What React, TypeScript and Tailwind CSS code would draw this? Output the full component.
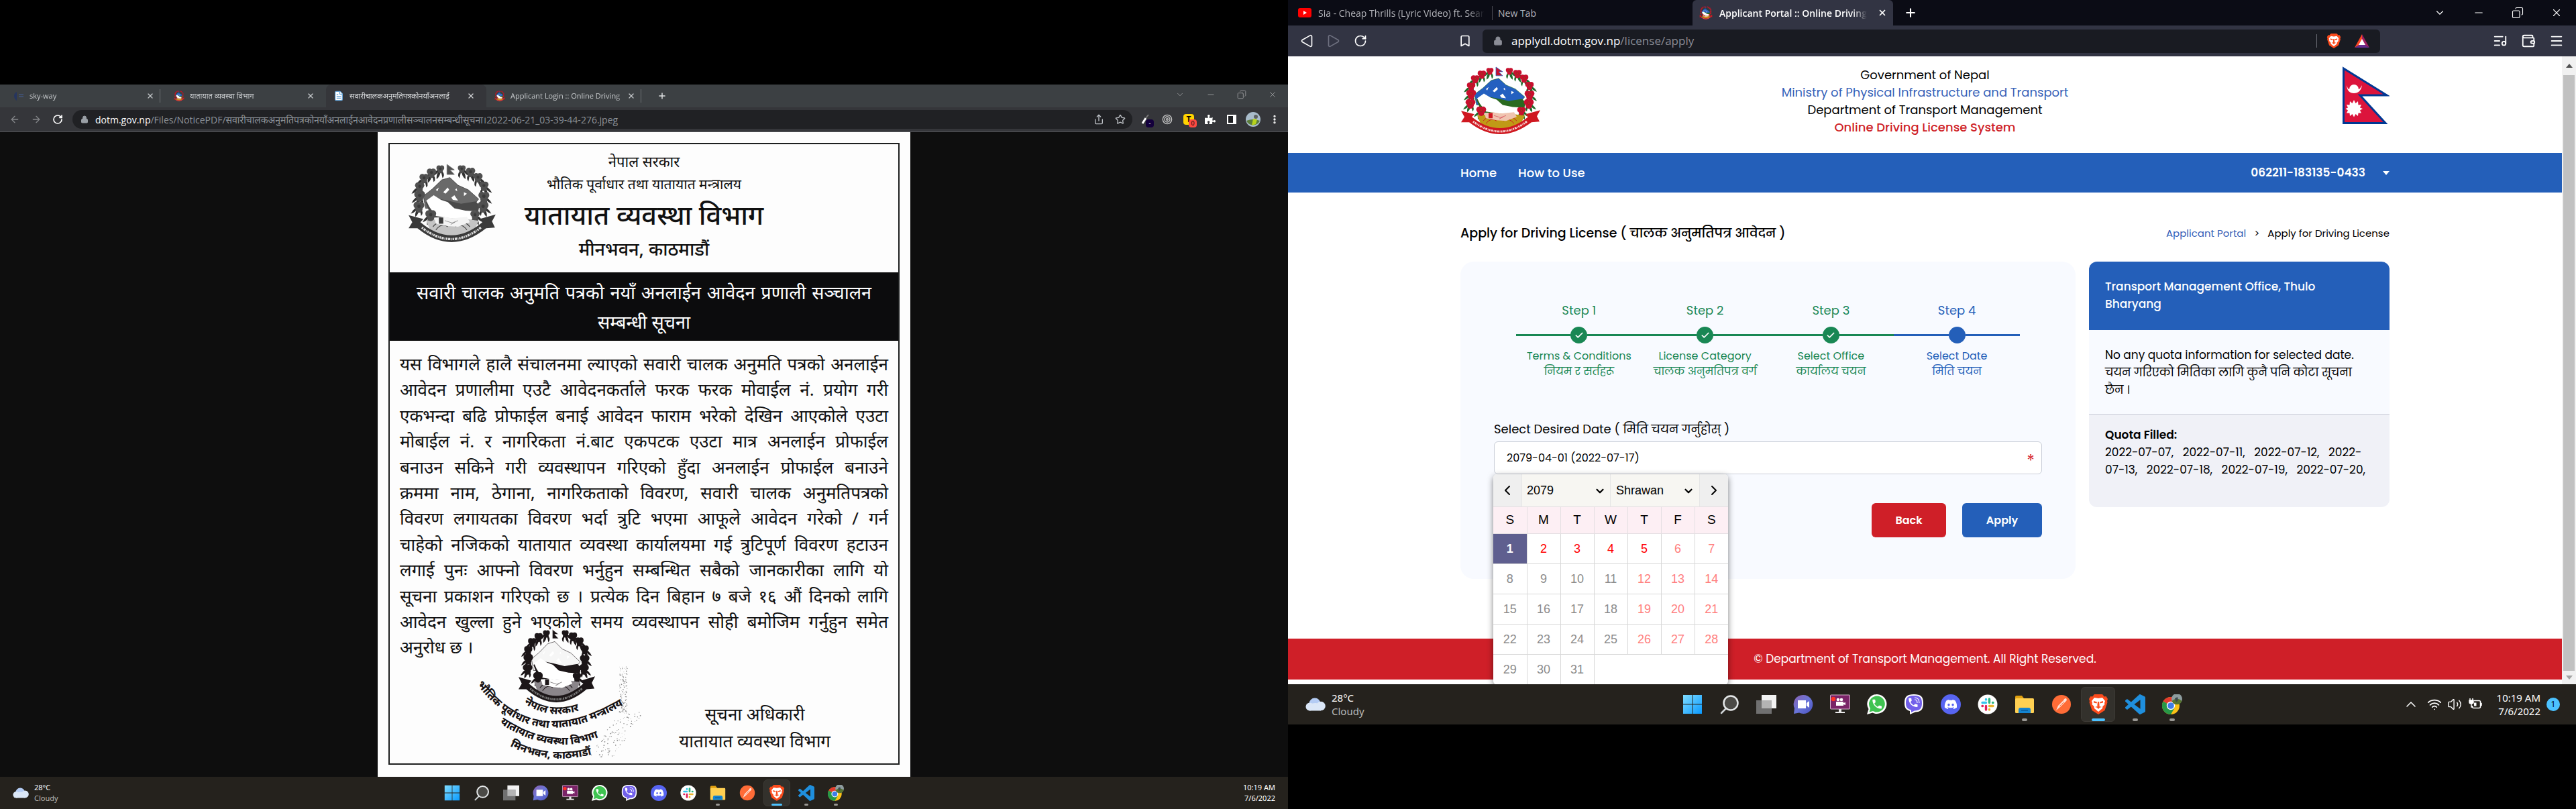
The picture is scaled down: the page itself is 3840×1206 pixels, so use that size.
import { ReactNode } from "react";
import {
  ArrowLeft,
  ArrowRight,
  Bookmark,
  Check,
  ChevronDown,
  ChevronLeft,
  ChevronRight,
  ChevronUp,
  Copy,
  FileText,
  ListMusic,
  Lock,
  Menu,
  Minus,
  MoreVertical,
  Plus,
  RotateCw,
  Share,
  Star,
  Target,
  Triangle,
  Volume2,
  Wallet,
  Wifi,
  X,
} from "lucide-react";
import { FaDiscord, FaPuzzlePiece } from "react-icons/fa";

type Palette = {
  flower: string;
  leaf: string;
  sky: string;
  hill: string;
  gold: string;
  ribbon: string;
  hand: string;
  motto: string;
};

const colourPalette: Palette = {
  flower: "#c8102e",
  leaf: "#1f6b2a",
  sky: "#2460c0",
  hill: "#2a6a1f",
  gold: "#c09a16",
  ribbon: "#cf1820",
  hand: "#f0c4b0",
  motto: "#f5d0d0",
};

const greyPalette: Palette = {
  flower: "#505050",
  leaf: "#303030",
  sky: "#6a6a6a",
  hill: "#4a4a4a",
  gold: "#c4c4c4",
  ribbon: "#3a3a3a",
  hand: "#f4f4f4",
  motto: "#dddddd",
};

const stampPalette: Palette = {
  flower: "#1c1618",
  leaf: "#1c1618",
  sky: "#f6f6f6",
  hill: "#1c1618",
  gold: "#8a858a",
  ribbon: "#1c1618",
  hand: "#ffffff",
  motto: "#777777",
};

const flowers = [
  [56, 15, 5], [44, 20, 6], [34, 27, 6], [28, 38, 6], [28, 50, 7], [27, 64, 7], [43, 75, 7],
  [85, 15, 5], [97, 19, 6], [107, 26, 6], [115, 37, 6], [115, 51, 7], [114, 64, 7], [103, 75, 6],
];

function EmblemArt({ p }: { p: Palette }) {
  return (
    <g>
      {flowers.map(([x, y, r], i) => {
        const side = x < 71 ? -1 : 1;
        return (
          <g key={i} fill={p.leaf}>
            <path d={`M${x} ${y} q${side * 7} 1 ${side * 11} 9 q${-side * 6} -1 ${-side * 11} -9z`} />
            <path d={`M${x} ${y} q${side * 6} 6 ${side * 5} 13 q${-side * 6} -4 ${-side * 5} -13z`} />
            <path d={`M${x} ${y} q${-side * 2} 7 ${-side * 3} 12 q${-side * 5} -5 ${side * 3} -12z`} />
          </g>
        );
      })}
      <path d="M33 50 L45 41 L58 29 L69 26 L80 36 L94 42 L108 54 L98 66 L36 66z" fill={p.sky} stroke={p.leaf} strokeWidth="0.6" />
      <path d="M60 45l6-6 2 3-5 5zM71 52l4-3 5 7-7-1zM88 45l4 2-4 3zM76 42l2-2 1 4zM50 42l4-3-2 5z" fill="#fff" />
      <path d="M36 58 L50 53 L66 56 L84 60 L104 57 L109 62 L106 78 L44 78z" fill={p.hill} />
      <path d="M37 56 L47 49 L57 55 L66 58 L75 66 L90 69 L106 70 L106 78 L98 80 L78 80 L50 76 L41 64z" fill="#fff" />
      <path d="M37 82 q34 -6 71 0 l-8 17 q-28 9 -56 0z" fill={p.gold} />
      <path d="M46 90q8-10 18-3M50 94q8-10 16-4M96 90q-8-10-18-3M92 94q-8-10-16-4" stroke={p.ribbon} strokeWidth="1" fill="none" />
      <path d="M48 79 L60 77 L72 79 L92 77 L96 84 L80 90 L66 89 L50 86z" fill={p.hand} />
      <path d="M62 82l10 3 8-3M70 87l6-3" stroke={p.flower} strokeWidth="0.5" fill="none" />
      <path d="M54 78h6v8h-6z" fill={p.ribbon} />
      {flowers.map(([x, y, r], i) => (
        <g key={i} fill={p.flower}>
          <circle cx={x - r * 0.4} cy={y - r * 0.3} r={r * 0.65} />
          <circle cx={x + r * 0.4} cy={y - r * 0.3} r={r * 0.65} />
          <circle cx={x} cy={y + r * 0.4} r={r * 0.7} />
          <circle cx={x} cy={y - r * 0.1} r={r * 0.28} fill={p.ribbon} stroke={p.leaf} strokeWidth="0.3" />
        </g>
      ))}
      <path d="M65 9 L75 16 L69 16 L75 22 L65 22z" fill={p.flower} stroke={p.sky} strokeWidth="0.8" />
      <path d="M13 75 L33 80 L29 84 Q71 118 113 84 L109 80 L131 74 L126 83 L130 91 L118 92 Q71 128 25 92 L13 92 L18 84z" fill={p.ribbon} />
      <path d="M31 91 Q71 121 111 91" stroke={p.motto} strokeWidth="3" strokeDasharray="2 1 3 1 1 1" fill="none" />
    </g>
  );
}

function Emblem({ p, className }: { p: Palette; className: string }) {
  return (
    <svg viewBox="12 8 120 102" preserveAspectRatio="none" className={className} role="img" aria-label="Emblem of Nepal">
      <EmblemArt p={p} />
    </svg>
  );
}

function NepalFlag() {
  return (
    <svg viewBox="0 0 70 86" className="h-[86px] w-[70px]" role="img" aria-label="Flag of Nepal">
      <path d="M1.5 3 L66 43 H26 L64 84.500 H1.500z" fill="#dc143c" stroke="#003893" strokeWidth="3" />
      <path d="M6 28q1 12 11 12t12-12q-4 7-5 6a7 7 0 1 0-14 0q-2 0-4-6z" fill="#fff" />
      <polygon
        fill="#fff"
        points="17,50 19.500,55 23,52 23.500,57.500 28,57 26,61.500 30,63 26,65.500 28,69.500 23.500,69.500 23,74 19.500,71 17,75.500 14.500,71 11,74 10.500,69.500 6,69.500 8,65.500 4.500,63 8,61.500 6,57 10.500,57.500 11,52 14.500,55"
      />
    </svg>
  );
}

/* ---------- application icons ---------- */

const phone =
  "M6.62 10.79c1.44 2.83 3.76 5.14 6.59 6.59l2.2-2.2c.27-.27.67-.36 1.02-.24 1.12.37 2.33.57 3.57.57.55 0 1 .45 1 1V20c0 .55-.45 1-1 1-9.39 0-17-7.61-17-17 0-.55.45-1 1-1h3.5c.55 0 1 .45 1 1 0 1.25.2 2.45.57 3.57.11.35.03.74-.25 1.02l-2.2 2.2z";

function Svg({ children, box = "0 0 30 30" }: { children: ReactNode; box?: string }) {
  return (
    <svg viewBox={box} className="size-full" aria-hidden="true">
      {children}
    </svg>
  );
}

const WindowsIcon = () => (
  <Svg>
    <defs>
      <linearGradient id="win" x1="0" y1="0" x2="1" y2="1">
        <stop offset="0" stopColor="#7fdcff" />
        <stop offset="1" stopColor="#0a9aff" />
      </linearGradient>
    </defs>
    <path d="M1 1h13.500v13.500H1zM15.500 1H29v13.500H15.500zM1 15.500h13.500V29H1zM15.500 15.500H29V29H15.500z" fill="url(#win)" />
  </Svg>
);
const SearchIcon = () => (
  <Svg>
    <path d="M11 20 L3 28" stroke="#cfd4d6" strokeWidth="2.500" strokeLinecap="round" />
    <circle cx="17" cy="13" r="10.500" fill="#4b4a46" stroke="#e4e7e8" strokeWidth="2.500" />
  </Svg>
);
const TaskViewIcon = () => (
  <Svg>
    <path d="M8 1h22v20H8z" fill="#f2f2f2" />
    <path d="M0 9h23v20H0z" fill="#707070" />
    <path d="M8 9h15v12H8z" fill="#b4b4b4" />
  </Svg>
);
const ChatIcon = () => (
  <Svg>
    <defs>
      <linearGradient id="chat" x1="0" y1="0" x2="1" y2="1">
        <stop offset="0" stopColor="#8a62b0" />
        <stop offset="0.500" stopColor="#6a75d8" />
        <stop offset="1" stopColor="#4a52c0" />
      </linearGradient>
    </defs>
    <path d="M15 1a14 14 0 1 1-6 26.500L1 29l1-8A14 14 0 0 1 15 1z" fill="url(#chat)" />
    <path d="M7 9h12v12H7zM20 13l4-3v10l-4-3z" fill="#fff" />
  </Svg>
);
const RecorderIcon = () => (
  <Svg>
    <rect x="0.500" y="1" width="29" height="21" rx="1" fill="#7a2468" stroke="#d8b8d0" />
    <path d="M13 22h4v4h5v2H8v-2h5z" fill="#e8e8e8" />
    <circle cx="12" cy="8" r="2.300" fill="#fff" />
    <circle cx="17" cy="8" r="2.300" fill="#fff" />
    <path d="M9 11h11v6H9zM20 13l3-1v4l-3-1z" fill="#fff" />
    <circle cx="5" cy="7" r="3.200" fill="#ff3224" />
  </Svg>
);
const WhatsAppIcon = () => (
  <Svg>
    <path d="M15 0a14.500 14.500 0 1 1-6.500 27.500L0 30l2.500-8A14.500 14.500 0 0 1 15 0z" fill="#fff" />
    <path d="M15 2.500a12 12 0 1 1-6 22.500l-5.500 1.500 1.500-5.500A12 12 0 0 1 15 2.500z" fill="#3fc351" />
    <g transform="translate(6 5.500) scale(0.760)">
      <path d={phone} fill="#fff" />
    </g>
  </Svg>
);
const ViberIcon = () => (
  <Svg>
    <path d="M15 0c10 0 14 3 14 13s-4 13.500-12 13.500L9 30v-5C3 23 1 20 1 13 1 3 5 0 15 0z" fill="#fff" />
    <path d="M15 2c8.500 0 12 2.500 12 11s-3 11-11 11.500l-5 2.500v-3.500C5 22 3 19 3 13 3 4.500 6.500 2 15 2z" fill="#7260ea" />
    <g transform="translate(5 3.500) scale(0.740)">
      <path d={phone} fill="#fff" />
    </g>
    <path d="M16 5q7 0 7 8M16 8q4 0 4 5" stroke="#fff" strokeWidth="1.200" fill="none" />
  </Svg>
);
const DiscordIcon = () => (
  <span className="flex size-full items-center justify-center rounded-full bg-[#5865f2] text-white">
    <FaDiscord className="size-2/3" />
  </span>
);
const SlackIcon = () => (
  <Svg>
    <circle cx="15" cy="15" r="14.500" fill="#fff" />
    <g strokeWidth="3.400" strokeLinecap="round">
      <path d="M7 12.500h5.500M12.500 7.500v0.500" stroke="#36c5f0" />
      <path d="M17.500 7v5.500M22.500 12.500h0.500" stroke="#2eb67d" />
      <path d="M12.500 17.500V23M7 17.500h0.500" stroke="#e01e5a" />
      <path d="M17.500 17.500H23M17.500 22.500v0.500" stroke="#ecb22e" />
    </g>
  </Svg>
);
const FolderIcon = () => (
  <Svg>
    <path d="M1 4q0-2 2-2h8l3 4v4H1z" fill="#e0a010" />
    <rect x="1" y="6" width="28" height="22" rx="1.500" fill="#ffd052" />
    <path d="M6 28v-5q0-3 3-3h12q3 0 3 3v5z" fill="#1484d0" />
    <path d="M10 24h10" stroke="#0a5a98" strokeWidth="1.500" />
  </Svg>
);
const PostmanIcon = () => (
  <Svg>
    <circle cx="15" cy="15" r="14" fill="#ff6c37" />
    <path d="M22 6q2 3-1 5l-8 8-3-2 8-8q1-3 4-3zM10 17l3 2-6 5z" fill="#fbe3da" />
    <path d="M12 18l7-7" stroke="#ff6c37" />
  </Svg>
);
const BraveIcon = () => (
  <Svg>
    <path d="M9 0h12l3 3.500 2.500-.5L29 7l-1 3 .5 2-4 12L15 30l-9.500-6-4-12L2 10 1 7l2.500-4 2.500.5z" fill="#fb4b1c" />
    <path d="M9 5l6 1 6-1 4 5-1 3 .5 2-3 3-.5 3-6 5-6-5-.5-3-3-3 .5-2-1-3z" fill="#fff" />
    <path d="M8 10l5 1.500-.5 2L8 12.500zM22 10l-5 1.500.5 2 4.500-1zM14 11h2l.7 6-1.700 1.500L13.300 17zM10 19l5-1.500 5 1.500-3 .7L15 22l-2-2.300z" fill="#fb4b1c" />
  </Svg>
);
const CodeIcon = () => (
  <Svg box="0 0 24 24">
    <path
      fill="#1f8fdd"
      d="M23.150 2.587L18.210.210a1.494 1.494 0 0 0-1.705.290l-9.460 8.630-4.120-3.128a.999.999 0 0 0-1.276.057L.327 7.261A1 1 0 0 0 .326 8.740L3.899 12 .326 15.260a1 1 0 0 0 .001 1.479L1.650 17.940a.999.999 0 0 0 1.276.057l4.120-3.128 9.460 8.630a1.492 1.492 0 0 0 1.704.290l4.942-2.377A1.500 1.500 0 0 0 24 20.060V3.939a1.500 1.500 0 0 0-.850-1.352zm-5.146 14.861L10.826 12l7.178-5.448v10.896z"
    />
  </Svg>
);
const ChromeIcon = () => (
  <Svg>
    <circle cx="13" cy="17" r="13" fill="#fbc116" />
    <path d="M13 17L1.700 10.500A13 13 0 0 1 24.300 10.500z" fill="#e33b2e" />
    <path d="M13 17L1.700 10.500A13 13 0 0 0 13 30l5.500-9.500z" fill="#279847" />
    <circle cx="13" cy="17" r="6.200" fill="#fff" />
    <circle cx="13" cy="17" r="4.800" fill="#3f7de8" />
    <circle cx="22" cy="7" r="8" fill="#8d9c9e" />
    <path d="M14.500 10q8-7 15 0a8 8 0 0 1-15 0z" fill="#56742f" />
    <path d="M19 6l4-2 1 5-3 3z" fill="#3d4a4f" />
  </Svg>
);
const CloudIcon = () => (
  <Svg box="0 0 30 20">
    <circle cx="14" cy="9" r="8.500" fill="#b4ccf4" />
    <circle cx="6.500" cy="13.500" r="6" fill="#dbe7f7" />
    <circle cx="23" cy="12.500" r="6.800" fill="#dbe7f7" />
    <path d="M6 10q9-4 17 0v9.500H6z" fill="#dbe7f7" />
  </Svg>
);
const PluggedBatteryIcon = () => (
  <svg viewBox="0 0 20 20" className="mr-[22px] size-5" fill="none" stroke="currentColor" strokeWidth="1.500" aria-hidden="true">
    <path d="M8 4.500h7.500q2 0 2 2v7q0 2-2 2h-8q-2 0-2-2V12M17.500 8.500H19v3h-1.500" />
    <path d="M2 1v3M6 1v3" />
    <path d="M1 4h6v3q0 2-3 2T1 7z" fill="currentColor" />
    <path d="M4 9v5h2" />
    <path d="M8 7.500h3.500v5H8z" fill="currentColor" stroke="none" />
  </svg>
);

const apps = [
  { name: "Start", Icon: WindowsIcon, state: "" },
  { name: "Search", Icon: SearchIcon, state: "" },
  { name: "Task view", Icon: TaskViewIcon, state: "" },
  { name: "Chat", Icon: ChatIcon, state: "" },
  { name: "Screen recorder", Icon: RecorderIcon, state: "" },
  { name: "WhatsApp", Icon: WhatsAppIcon, state: "" },
  { name: "Viber", Icon: ViberIcon, state: "" },
  { name: "Discord", Icon: DiscordIcon, state: "" },
  { name: "Slack", Icon: SlackIcon, state: "" },
  { name: "File Explorer", Icon: FolderIcon, state: "open" },
  { name: "Postman", Icon: PostmanIcon, state: "" },
  { name: "Brave", Icon: BraveIcon, state: "active" },
  { name: "Visual Studio Code", Icon: CodeIcon, state: "open" },
  { name: "Chrome", Icon: ChromeIcon, state: "open" },
];

function Taskbar({ large = false }: { large?: boolean }) {
  return (
    <footer
      className={
        large
          ? "grid h-[60px] shrink-0 grid-cols-[1fr_auto_1fr] items-center bg-[#25221d] font-['Noto_Sans',sans-serif] text-[15px] leading-5 text-white"
          : "grid h-12 shrink-0 grid-cols-[1fr_auto_1fr] items-center bg-[#25221d] font-['Noto_Sans',sans-serif] text-[11px] leading-4 text-white"
      }
    >
      <div className={large ? "flex items-center gap-[9px] pl-[26px]" : "flex items-center gap-2 pl-[19px]"}>
        <span className={large ? "h-5 w-[30px]" : "h-4 w-6"}>
          <CloudIcon />
        </span>
        <div>
          <div>28°C</div>
          <div className="text-[#b9b7b4]">Cloudy</div>
        </div>
      </div>
      <div className="flex">
        {apps.map(({ name, Icon, state }) => (
          <button
            key={name}
            type="button"
            aria-label={name}
            className={
              large
                ? "relative flex h-[60px] w-[55px] items-center justify-center"
                : "relative flex h-12 w-11 items-center justify-center"
            }
          >
            {state === "active" && (
              <span className="absolute inset-x-[2px] inset-y-1 rounded-md border border-[#3d3a35] bg-[#33312c]" />
            )}
            <span className={large ? "relative size-[30px]" : "relative size-6"}>
              <Icon />
            </span>
            {state === "active" && (
              <span className={large ? "absolute bottom-[5px] h-1 w-5 rounded-full bg-[#4cc2ff]" : "absolute bottom-[5px] h-[3px] w-4 rounded-full bg-[#4cc2ff]"} />
            )}
            {state === "open" && (
              <span className={large ? "absolute bottom-[5px] h-1 w-2 rounded-full bg-[#9a9894]" : "absolute bottom-[5px] h-[3px] w-[6px] rounded-full bg-[#9a9894]"} />
            )}
          </button>
        ))}
      </div>
      {large ? (
        <div className="flex items-center justify-end pr-6">
          <ChevronUp className="mr-3 size-6" strokeWidth={1.5} />
          <Wifi className="mr-2 size-[22px]" />
          <Volume2 className="mr-[10px] size-[22px]" strokeWidth={1.5} />
          <PluggedBatteryIcon />
          <div className="text-right">
            <div>10:19 AM</div>
            <div>7/6/2022</div>
          </div>
          <span className="ml-[9px] flex size-5 items-center justify-center rounded-full bg-[#4cc2ff] text-[12px] text-black">
            1
          </span>
        </div>
      ) : (
        <div className="pr-[19px] text-right">
          <div>10:19 AM</div>
          <div>7/6/2022</div>
        </div>
      )}
    </footer>
  );
}

/* ---------- left monitor ---------- */

const SmallEmblem = ({ large = false }: { large?: boolean }) => (
  <Emblem p={colourPalette} className={large ? "h-5 w-5 shrink-0" : "h-4 w-4 shrink-0"} />
);

function ChromeTab({ icon, title, active = false, divider = false }: { icon: ReactNode; title: string; active?: boolean; divider?: boolean }) {
  return (
    <div
      className={
        active
          ? "flex w-[239px] items-center rounded-t-lg bg-[#35363a] pr-2 pl-[11px] text-[#d6d8da]"
          : "flex w-[239px] items-center pr-2 pl-3 text-[#c8cbce]"
      }
    >
      {icon}
      <span className="ml-2 w-[176px] whitespace-nowrap [mask-image:linear-gradient(to_right,black_90%,transparent)]">
        {title}
      </span>
      <button type="button" aria-label={`Close ${title}`} className="ml-auto flex items-center">
        <X className="size-3" strokeWidth={2.5} />
      </button>
      <span className={divider ? "ml-2 h-5 w-px bg-[#6d7073]" : "ml-2 h-5 w-px"} />
    </div>
  );
}

function ChromeBrowserBars() {
  return (
    <div className="shrink-0 font-['Open_Sans','Noto_Sans',sans-serif]">
      <div className="flex h-[34px] items-stretch bg-[#3c4043] pl-2 text-[11px]">
        <ChromeTab
          title="sky-way"
          divider
          icon={
            <svg viewBox="0 0 16 16" className="size-4 shrink-0" aria-hidden="true">
              <path d="M5 2v13q-4-3-4-7t4-6z" fill="#26355f" />
              <path d="M8 6h7M8 9h7" stroke="#41547c" strokeWidth="1.500" />
            </svg>
          }
        />
        <ChromeTab title="यातायात व्यवस्था विभाग" icon={<SmallEmblem />} />
        <ChromeTab
          title="सवारीचालकअनुमतिपत्रकोनयाँअनलाई"
          active
          icon={<FileText className="size-4 shrink-0 fill-white text-[#6aa6d8]" />}
        />
        <ChromeTab title="Applicant Login :: Online Driving" divider icon={<SmallEmblem />} />
        <button type="button" aria-label="New tab" className="ml-4 text-[#dfe1e3]">
          <Plus className="size-[14px]" strokeWidth={2.5} />
        </button>
        <div className="ml-auto flex items-start gap-8 pt-2 pr-4 text-[#9a9c9e]">
          <ChevronDown className="size-[14px]" strokeWidth={1.5} />
          <Minus className="size-[14px]" strokeWidth={1.5} />
          <Copy className="size-[14px] -scale-x-100" strokeWidth={1.5} />
          <X className="size-[14px]" strokeWidth={1.5} />
        </div>
      </div>
      <div className="flex h-[37px] items-center border-b border-[#55565a] bg-[#35363a] pr-3 pl-[14px]">
        <button type="button" aria-label="Back" className="text-[#85878a]">
          <ArrowLeft className="size-4" />
        </button>
        <button type="button" aria-label="Forward" className="ml-4 text-[#85878a]">
          <ArrowRight className="size-4" />
        </button>
        <button type="button" aria-label="Reload" className="ml-4 text-white">
          <RotateCw className="size-4" strokeWidth={2.5} />
        </button>
        <div className="ml-[14px] flex h-7 flex-1 items-center rounded-full bg-[#202124] pr-[10px] pl-3 text-[14px]">
          <Lock className="size-3 fill-[#9aa0a6] text-[#9aa0a6]" />
          <span className="ml-[10px] text-[#8e9399]">
            <span className="text-white">dotm.gov.np</span>
            /Files/NoticePDF/सवारीचालकअनुमतिपत्रकोनयाँअनलाईनआवेदनप्रणालीसञ्चालनसम्बन्धीसूचना।2022-06-21_03-39-44-276.jpeg
          </span>
          <Share className="ml-auto size-4 text-[#bdc1c6]" />
          <Star className="ml-4 size-4 text-[#bdc1c6]" />
        </div>
        <div className="ml-3 flex items-center gap-4 text-white">
          <span className="relative size-4">
            <svg viewBox="0 0 16 16" className="size-4" aria-hidden="true">
              <path d="M3 14l5-8" stroke="#fff" strokeWidth="3" />
              <path d="M8 6l4-5" stroke="#777" strokeWidth="2" />
            </svg>
            <span className="absolute top-2 left-2 flex h-3 w-3 items-center justify-center rounded-sm bg-[#14003c] text-[9px]">-</span>
          </span>
          <Target className="size-4 text-[#c8c8c8]" />
          <span className="relative flex size-4 items-center justify-center rounded bg-[#ffd400] text-[12px] font-bold text-black">
            T
            <span className="absolute top-2 left-2 flex h-3 w-3 items-center justify-center rounded-sm bg-[#ff4a42] text-[9px] font-normal">0</span>
          </span>
          <FaPuzzlePiece className="size-4" />
          <svg viewBox="0 0 16 16" className="size-4" aria-hidden="true">
            <path d="M2 2h12v12H2z" fill="#202124" stroke="#fff" strokeWidth="2" />
            <path d="M10 2h4v12h-4z" fill="#fff" />
          </svg>
          <svg viewBox="0 0 22 22" className="-mx-[3px] size-[22px]" aria-hidden="true">
            <circle cx="11" cy="11" r="11" fill="#a9bccb" />
            <path d="M1 13q10-4 20 0a11 11 0 0 1-20 0z" fill="#5c7d3c" />
            <path d="M11 10l6 1-2 7-6 2z" fill="#b7d31c" />
            <circle cx="15" cy="7" r="3" fill="#5d6264" />
          </svg>
          <MoreVertical className="size-4" strokeWidth={3} />
        </div>
      </div>
    </div>
  );
}

const noticeLines = [
  "यस विभागले हालै संचालनमा ल्याएको सवारी चालक अनुमति पत्रको अनलाईन",
  "आवेदन प्रणालीमा एउटै आवेदनकर्ताले फरक फरक मोवाईल नं. प्रयोग गरी",
  "एकभन्दा बढि प्रोफाईल बनाई आवेदन फाराम भरेको देखिन आएकोले एउटा",
  "मोबाईल नं. र नागरिकता नं.बाट एकपटक एउटा मात्र अनलाईन प्रोफाईल",
  "बनाउन सकिने गरी व्यवस्थापन गरिएको हुँदा अनलाईन प्रोफाईल बनाउने",
  "क्रममा नाम, ठेगाना, नागरिकताको विवरण, सवारी चालक अनुमतिपत्रको",
  "विवरण लगायतका विवरण भर्दा त्रुटि भएमा आफूले आवेदन गरेको / गर्न",
  "चाहेको नजिकको यातायात व्यवस्था कार्यालयमा गई त्रुटिपूर्ण विवरण हटाउन",
  "लगाई पुनः आफ्नो विवरण भर्नुहुन सम्बन्धित सबैको जानकारीका लागि यो",
  "सूचना प्रकाशन गरिएको छ । प्रत्येक दिन बिहान ७ बजे १६ औं दिनको लागि",
  "आवेदन खुल्ला हुने भएकोले समय व्यवस्थापन सोही बमोजिम गर्नुहुन समेत",
];

const noise = (n: number) => {
  const v = Math.sin(n * 12.9898) * 43758.5453;
  return v - Math.floor(v);
};

const speckles = Array.from({ length: 240 }, (_, i) => {
  const t = noise(i + 1);
  const left = t < 0.5 ? 224 : 224 - (t - 0.5) * 90;
  const width = t < 0.5 ? 12 : 36;
  return { x: left + noise(i + 500) * width, y: 62 + t * 135, r: noise(i + 900) * 0.6 + 0.3 };
});

function Seal() {
  return (
    <svg viewBox="0 0 260 210" className="absolute -top-3 left-[103px] h-[210px] w-[260px] font-['Noto_Sans',sans-serif]" role="img" aria-label="Official stamp">
      <svg x="73" y="5" width="116" height="110" viewBox="12 8 120 102" preserveAspectRatio="none">
        <EmblemArt p={stampPalette} />
      </svg>
      <defs>
        <path id="arc1" d="M82 116 Q125 146 180 121" />
        <path id="arc2" d="M12 88 Q100 208 250 106" />
        <path id="arc3" d="M46 146 Q130 202 208 160" />
        <path id="arc4" d="M61 180 Q120 212 192 190" />
      </defs>
      <g fill="#161214" fontSize="16" fontWeight="800">
        <text><textPath href="#arc1">नेपाल सरकार</textPath></text>
        <text><textPath href="#arc2">भौतिक पूर्वाधार तथा यातायात मन्त्रालय</textPath></text>
        <text><textPath href="#arc3">यातायात व्यवस्था विभाग</textPath></text>
        <text><textPath href="#arc4">मिनभवन, काठमाडौं</textPath></text>
      </g>
      {speckles.map((s, i) => (
        <circle key={i} cx={s.x} cy={s.y} r={s.r} fill="#888" />
      ))}
    </svg>
  );
}

function Notice() {
  return (
    <main className="flex flex-1 justify-center bg-[#0e0e0e]">
      <article className="flex w-[794px] flex-col bg-[#fdfdfd] px-4 pt-4 pb-[18px] font-['Noto_Sans',sans-serif] text-[#111]">
        <div className="flex flex-1 flex-col border-2 border-[#1d1f1f]">
          <header className="grid h-[191px] grid-cols-[1fr_auto_1fr] pt-[7px]">
            <Emblem p={greyPalette} className="mt-[22px] ml-[27px] h-[117px] w-[132px]" />
            <div className="text-center">
              <p className="text-[22px] leading-9">नेपाल सरकार</p>
              <p className="text-[21px] leading-8">भौतिक पूर्वाधार तथा यातायात मन्त्रालय</p>
              <h1 className="text-[40px] leading-[60px] font-medium">यातायात व्यवस्था विभाग</h1>
              <p className="text-[27px] leading-[42px] font-medium">मीनभवन, काठमाडौं</p>
            </div>
          </header>
          <div className="h-[102px] bg-[#0c0c0d] px-10 pt-2 text-center text-[27px] leading-[44px] text-white">
            <p className="[text-align-last:justify] whitespace-nowrap">सवारी चालक अनुमति पत्रको नयाँ अनलाईन आवेदन प्रणाली सञ्चालन</p>
            <p>सम्बन्धी सूचना</p>
          </div>
          <div className="flex flex-1 flex-col px-[15px] pt-4">
            <div className="flex h-[420px] flex-col justify-between text-[26px] leading-9">
              {noticeLines.map((line) => (
                <p key={line} className="[text-align-last:justify] whitespace-nowrap">
                  {line}
                </p>
              ))}
            </div>
            <div className="relative flex-1">
              <p className="text-[26px] leading-10">अनुरोध छ ।</p>
              <Seal />
              <div className="ml-auto w-fit pt-[60px] pr-[86px] text-center text-[26px] leading-10">
                <p>सूचना अधिकारी</p>
                <p>यातायात व्यवस्था विभाग</p>
              </div>
            </div>
          </div>
        </div>
      </article>
    </main>
  );
}

/* ---------- right monitor ---------- */

function BraveBrowserBars() {
  return (
    <div className="shrink-0 font-['Open_Sans','Noto_Sans',sans-serif]">
      <div className="flex h-[38px] items-center bg-[#0b0c15] text-[14px] text-[#b4b5bb]">
        <div className="flex w-[305px] items-center border-r border-[#4a4b53] pl-[15px]">
          <svg viewBox="0 0 20 14" className="h-[14px] w-5 shrink-0" aria-hidden="true">
            <rect width="20" height="14" rx="3" fill="#f00" />
            <path d="M8 4l5 3-5 3z" fill="#fff" />
          </svg>
          <span className="ml-[10px] whitespace-nowrap [mask-image:linear-gradient(to_right,black_90%,transparent)]">
            Sia - Cheap Thrills (Lyric Video) ft. Sear
          </span>
        </div>
        <div className="w-[298px] pl-2">New Tab</div>
        <div className="flex h-[38px] w-[299px] items-center rounded-t-md bg-[#323443] pr-[9px] pl-[10px] font-semibold text-white">
          <SmallEmblem large />
          <span className="ml-[10px] whitespace-nowrap [mask-image:linear-gradient(to_right,black_90%,transparent)]">
            Applicant Portal :: Online Driving
          </span>
          <button type="button" aria-label="Close tab" className="ml-auto">
            <X className="size-[14px]" strokeWidth={3} />
          </button>
        </div>
        <button type="button" aria-label="New tab" className="ml-4 text-white">
          <Plus className="size-5" strokeWidth={2.5} />
        </button>
        <div className="ml-auto flex items-center gap-10 pr-5 text-white">
          <ChevronDown className="size-[18px]" strokeWidth={1.5} />
          <Minus className="size-[18px]" strokeWidth={1.5} />
          <Copy className="size-[18px] -scale-x-100" strokeWidth={1.5} />
          <X className="size-[18px]" strokeWidth={1.5} />
        </div>
      </div>
      <div className="flex h-[46px] items-center bg-[#323443] px-[18px] text-white">
        <button type="button" aria-label="Back">
          <Triangle className="size-5 -rotate-90" />
        </button>
        <button type="button" aria-label="Forward" className="ml-5 text-[#6f7180]">
          <Triangle className="size-5 rotate-90" />
        </button>
        <button type="button" aria-label="Reload" className="ml-5">
          <RotateCw className="size-5" />
        </button>
        <button type="button" aria-label="Bookmark" className="ml-[136px]">
          <Bookmark className="size-5" />
        </button>
        <div className="ml-4 flex h-[35px] w-[1338px] items-center rounded-md bg-[#191b22] px-4 text-[17px]">
          <Lock className="size-[14px] fill-[#8b8d96] text-[#8b8d96]" />
          <span className="ml-[13px] text-[#8b8d96]">
            <span className="text-white">applydl.dotm.gov.np</span>/license/apply
          </span>
          <span className="ml-auto h-5 w-px bg-[#6b6d76]" />
          <span className="ml-[14px] size-[22px]">
            <BraveIcon />
          </span>
          <svg viewBox="0 0 22 20" className="ml-5 h-5 w-[22px]" aria-hidden="true">
            <path d="M11 0L0 20l7-4 4-8z" fill="#ff4724" />
            <path d="M11 0l11 20-7-4-4-8z" fill="#9e1f63" />
            <path d="M0 20h22l-7-4H7z" fill="#662d91" />
            <path d="M11 7l5 9H6z" fill="#fff" />
          </svg>
        </div>
        <div className="ml-auto flex items-center gap-5">
          <ListMusic className="size-[22px]" />
          <Wallet className="size-[22px]" />
          <Menu className="size-[22px]" />
        </div>
      </div>
    </div>
  );
}

const steps = [
  { n: "Step 1", en: "Terms & Conditions", ne: "नियम र सर्तहरू" },
  { n: "Step 2", en: "License Category", ne: "चालक अनुमतिपत्र वर्ग" },
  { n: "Step 3", en: "Select Office", ne: "कार्यालय चयन" },
  { n: "Step 4", en: "Select Date", ne: "मिति चयन" },
];

const weekdays = ["S", "M", "T", "W", "T", "F", "S"];
const weeks = [0, 7, 14, 21].map((start) => weekdays.map((_, i) => start + i + 1));

function dayClass(day: number, column: number) {
  if (day === 1) return "bg-[#5f5f8f] font-bold text-white";
  if (day <= 5) return "text-[#ff0000]";
  if (day <= 7 || (day < 29 && column >= 4)) return "text-[#ff8080]";
  return "text-[#8c8c8c]";
}

function Calendar() {
  return (
    <div className="absolute top-full -left-px z-10 w-[350px] overflow-hidden rounded-md bg-white font-['Liberation_Sans',sans-serif] text-[18px] shadow-[0_3px_10px_rgba(0,0,0,0.5)]">
      <div className="flex h-12 bg-[#f7f6f2]">
        <button type="button" aria-label="Previous month" className="flex w-[42px] items-center justify-center bg-[#efefef]">
          <ChevronLeft className="size-6" />
        </button>
        <div className="relative w-[133px] border-x border-[#e6e6e6]">
          <select aria-label="Year" className="size-full appearance-none bg-transparent pl-[7px]">
            <option>2079</option>
          </select>
          <ChevronDown className="pointer-events-none absolute top-4 right-[6px] size-[18px]" strokeWidth={3} />
        </div>
        <div className="relative w-[133px] border-r border-[#e6e6e6]">
          <select aria-label="Month" className="size-full appearance-none bg-transparent pl-2">
            <option>Shrawan</option>
          </select>
          <ChevronDown className="pointer-events-none absolute top-4 right-[7px] size-[18px]" strokeWidth={3} />
        </div>
        <button type="button" aria-label="Next month" className="flex w-[42px] items-center justify-center bg-[#efefef]">
          <ChevronRight className="size-6" />
        </button>
      </div>
      <table className="w-full table-fixed border-collapse text-center">
        <thead>
          <tr className="h-10 bg-[#fdeff4] text-[19px]">
            {weekdays.map((d, i) => (
              <th key={i} scope="col" className="border-x border-y border-[#e4dfe2] font-normal first:border-l-0 last:border-r-0">
                {d}
              </th>
            ))}
          </tr>
        </thead>
        <tbody>
          {weeks.map((week) => (
            <tr key={week[0]} className="h-[45px]">
              {week.map((day, i) => (
                <td key={day} className={`border border-[#d8d8d8] first:border-l-0 last:border-r-0 ${dayClass(day, i)}`}>
                  {day}
                </td>
              ))}
            </tr>
          ))}
          <tr className="h-[45px] text-[#8c8c8c]">
            <td className="border-r border-[#d8d8d8]">29</td>
            <td className="border-r border-[#d8d8d8]">30</td>
            <td className="border-r border-[#d8d8d8]">31</td>
            <td colSpan={4} />
          </tr>
        </tbody>
      </table>
    </div>
  );
}

function Portal() {
  return (
    <div className="min-w-0 flex-1 bg-white font-['Poppins','Noto_Sans',sans-serif] text-[18px] text-black">
      <header className="mx-auto grid h-36 w-full max-w-[1385px] grid-cols-[1fr_auto_1fr] items-start pt-[15px]">
        <Emblem p={colourPalette} className="h-[101px] w-[120px]" />
        <div className="text-center leading-[26px]">
          <p>Government of Nepal</p>
          <p className="text-[#3561b8]">Ministry of Physical Infrastructure and Transport</p>
          <p>Department of Transport Management</p>
          <p className="font-medium text-[#cf1f28]">Online Driving License System</p>
        </div>
        <div className="flex justify-end">
          <NepalFlag />
        </div>
      </header>
      <nav className="bg-[#245fb9] font-medium text-white">
        <div className="mx-auto flex h-[59px] w-full max-w-[1385px] items-center gap-8">
          <a href="#home">Home</a>
          <a href="#how-to-use">How to Use</a>
          <button type="button" className="ml-auto flex items-center gap-[26px] text-[17px] font-semibold">
            062211-183135-0433
            <svg viewBox="0 0 10 6" className="h-[6px] w-[10px]" aria-hidden="true">
              <path d="M0 0h10L5 6z" fill="currentColor" />
            </svg>
          </button>
        </div>
      </nav>
      <div className="mx-auto w-full max-w-[1385px]">
        <div className="mt-12 mb-[29px] flex items-center justify-between leading-[26px]">
          <h1 className="text-[19px] font-medium">Apply for Driving License ( चालक अनुमतिपत्र आवेदन )</h1>
          <nav aria-label="Breadcrumb" className="flex gap-3 text-[15px]">
            <a href="#portal" className="text-[#3561b8]">Applicant Portal</a>
            <span>&gt;</span>
            <span>Apply for Driving License</span>
          </nav>
        </div>
        <div className="flex items-start gap-5">
          <form className="flex-1 rounded-[20px] bg-[#f8faff] px-[50px] pt-[60px] pb-[62px]">
            <ol className="mx-[33px] grid grid-cols-4 text-center">
              {steps.map((s, i) => {
                const done = i < 3;
                return (
                  <li key={s.n} className={done ? "text-[#198754]" : "text-[#245fb9]"}>
                    <p className="leading-[26px]">{s.n}</p>
                    <div className="mt-[11px] flex h-[25px] items-center">
                      <span className="h-[3px] flex-1 bg-current" />
                      <span className="flex size-[25px] items-center justify-center rounded-full bg-current">
                        {done && <Check className="size-[14px] text-white" strokeWidth={3} />}
                      </span>
                      <span className="h-[3px] flex-1 bg-current" />
                    </div>
                    <p className="mt-[7px] text-[16px] leading-[23px]">{s.en}</p>
                    <p className="text-[16px] leading-[23px]">{s.ne}</p>
                  </li>
                );
              })}
            </ol>
            <label htmlFor="desired-date" className="mt-[62px] block leading-[26px]">
              Select Desired Date ( मिति चयन गर्नुहोस् )
            </label>
            <div className="relative mt-[5px]">
              <input
                id="desired-date"
                defaultValue="2079-04-01 (2022-07-17)"
                className="block h-[49px] w-full rounded-md border border-[#c9ced8] bg-white px-[18px] text-[16px]"
              />
              <span className="absolute top-[14px] right-[11px] text-[24px] leading-8 text-[#d8303a]">*</span>
              <Calendar />
            </div>
            <div className="mt-[43px] flex justify-end gap-6 text-[16px] font-semibold text-white">
              <button type="button" className="h-[51px] w-[111px] rounded-md bg-[#cf1f28]">Back</button>
              <button type="submit" className="h-[51px] w-[119px] rounded-md bg-[#245fb9]">Apply</button>
            </div>
          </form>
          <aside className="w-[448px] overflow-hidden rounded-xl bg-[#f8faff] text-[17px] leading-[26px]">
            <h2 className="bg-[#245fb9] px-6 pt-6 pb-[26px] font-medium text-white">
              Transport Management Office, Thulo
              <br />
              Bharyang
            </h2>
            <p className="px-6 pt-6 pb-[23px]">
              No any quota information for selected date.
              <br />
              चयन गरिएको मितिका लागि कुनै पनि कोटा सूचना
              <br />
              छैन ।
            </p>
            <div className="border-t border-[#cdd0da] bg-[#f0f1f7] px-6 pt-[17px] pb-[43px] whitespace-nowrap">
              <p className="font-semibold">Quota Filled:</p>
              <p>
                2022-07-07, &nbsp; 2022-07-11, &nbsp; 2022-07-12, &nbsp; 2022-
                <br />
                07-13, &nbsp; 2022-07-18, &nbsp; 2022-07-19, &nbsp; 2022-07-20,
              </p>
            </div>
          </aside>
        </div>
      </div>
      <footer className="mt-[89px] flex h-[61px] items-center justify-center bg-[#cf1f28] text-[17px] text-white">
        © Department of Transport Management. All Right Reserved.
      </footer>
    </div>
  );
}

export default function App() {
  return (
    <div className="flex min-h-screen bg-black">
      <section className="flex min-w-0 flex-1 flex-col pt-[126px]">
        <ChromeBrowserBars />
        <Notice />
        <Taskbar />
      </section>
      <section className="flex min-w-0 flex-1 flex-col">
        <BraveBrowserBars />
        <div className="flex h-[936px] overflow-hidden">
          <Portal />
          <div className="flex w-[21px] flex-col items-center bg-[#f1f1f1]">
            <svg viewBox="0 0 10 6" className="my-[11px] h-[6px] w-[10px]" aria-hidden="true">
              <path d="M0 6h10L5 0z" fill="#505050" />
            </svg>
            <div className="w-[17px] flex-1 bg-[#c1c1c1]" />
            <svg viewBox="0 0 10 6" className="my-[7px] h-[6px] w-[10px]" aria-hidden="true">
              <path d="M0 0h10L5 6z" fill="#a3a3a3" />
            </svg>
          </div>
        </div>
        <Taskbar large />
      </section>
    </div>
  );
}
